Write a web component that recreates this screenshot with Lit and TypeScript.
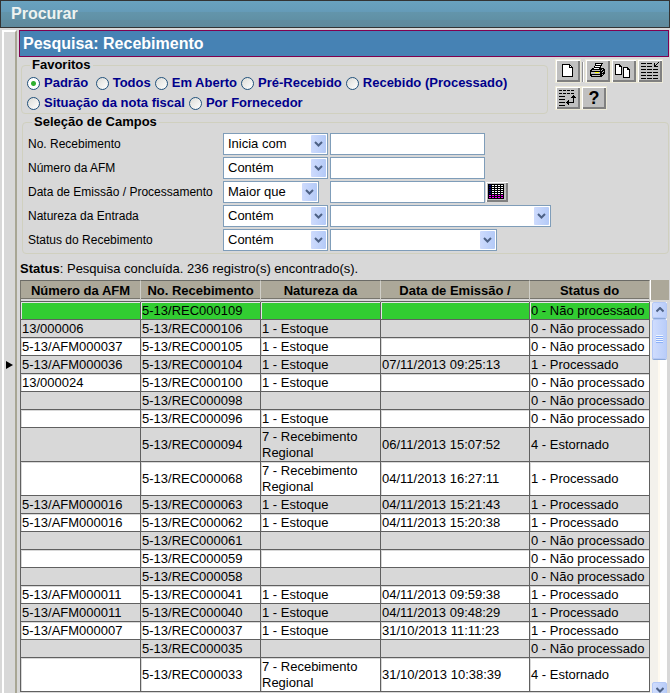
import { LitElement, html, css, svg } from "lit";
import { customElement, property, state } from "lit/decorators.js";
import { classMap } from "lit/directives/class-map.js";

type Row = [string, string, string, string, string];

const PENDING = "0 - Não processado";
const DONE = "1 - Processado";
const VOID = "4 - Estornado";
const STOCK = "1 - Estoque";
const REGIONAL = "7 - Recebimento Regional";

const ROWS: Row[] = [
  ["", "5-13/REC000109", "", "", PENDING],
  ["13/000006", "5-13/REC000106", STOCK, "", PENDING],
  ["5-13/AFM000037", "5-13/REC000105", STOCK, "", PENDING],
  ["5-13/AFM000036", "5-13/REC000104", STOCK, "07/11/2013 09:25:13", DONE],
  ["13/000024", "5-13/REC000100", STOCK, "", PENDING],
  ["", "5-13/REC000098", "", "", PENDING],
  ["", "5-13/REC000096", STOCK, "", PENDING],
  ["", "5-13/REC000094", REGIONAL, "06/11/2013 15:07:52", VOID],
  ["", "5-13/REC000068", REGIONAL, "04/11/2013 16:27:11", DONE],
  ["5-13/AFM000016", "5-13/REC000063", STOCK, "04/11/2013 15:21:43", DONE],
  ["5-13/AFM000016", "5-13/REC000062", STOCK, "04/11/2013 15:20:38", DONE],
  ["", "5-13/REC000061", "", "", PENDING],
  ["", "5-13/REC000059", "", "", PENDING],
  ["", "5-13/REC000058", "", "", PENDING],
  ["5-13/AFM000011", "5-13/REC000041", STOCK, "04/11/2013 09:59:38", DONE],
  ["5-13/AFM000011", "5-13/REC000040", STOCK, "04/11/2013 09:48:29", DONE],
  ["5-13/AFM000007", "5-13/REC000037", STOCK, "31/10/2013 11:11:23", DONE],
  ["", "5-13/REC000035", "", "", PENDING],
  ["", "5-13/REC000033", REGIONAL, "31/10/2013 10:38:39", VOID],
];

const HEADINGS = ["Número da AFM", "No. Recebimento", "Natureza da", "Data de Emissão /", "Status do"];

const FAVORITES = [
  ["Padrão\u00a0", "Todos", "Em Aberto", "Pré-Recebido", "Recebido (Processado)"],
  ["Situação da nota fiscal", "Por Fornecedor"],
];

interface Field {
  id: string;
  label: string;
  operator: string;
  kind: "text" | "date" | "wide" | "medium";
}

const FIELDS: Field[] = [
  { id: "recebimento", label: "No. Recebimento", operator: "Inicia com", kind: "text" },
  { id: "afm", label: "Número da AFM", operator: "Contém", kind: "text" },
  { id: "data", label: "Data de Emissão / Processamento", operator: "Maior que", kind: "date" },
  { id: "natureza", label: "Natureza da Entrada", operator: "Contém", kind: "wide" },
  { id: "status", label: "Status do Recebimento", operator: "Contém", kind: "medium" },
];

const bars = (x: number, w: number, from: number, to: number) => {
  const ys: number[] = [];
  for (let y = from; y <= to; y += 3) ys.push(y);
  return ys.map((y) => svg`<rect x=${x} y=${y} width=${w} height="1" fill="#000"/>`);
};

const ICONS = {
  page: svg`<path d="M7.5 5.5h7l3 3v9h-10z" fill="#fff" stroke="#000"/><path d="M14.5 5.5v3h3" fill="none" stroke="#000"/>`,
  print: svg`
    <path d="M5 11h1v-1h1v-1h12v1h1v5h-1v1h-1v1h-1v1h-11v-1h-1z" fill="#000"/>
    <path d="M10 4h8v1h-1v2h-1v2h-1v1h-7v-1h1v-2h1z" fill="#000"/>
    <path d="M11 5h5v1h-5zM10 7h5v1h-5zM9 9h5v1h-5z" fill="#fff"/>
    <path d="M7 11h8v1h-8zM6 13h9v2h-9zM7 16h8v1h-8z" fill="#c0c0c0"/>
    <path d="M17 10h1v1h-1v1h-1v-1h1zM17 13h1v1h-1zM18 12h1v1h-1zM17 15h1v1h-1z" fill="#c0c0c0"/>
    <path d="M10 13h4v1h-4z" fill="#ff0"/>`,
  copy: svg`
    <path d="M4.5 5.5h4l2 2v8h-6z" fill="#fff" stroke="#000"/><path d="M8.5 5.5v2h2" fill="none" stroke="#000"/>
    <path d="M12.5 8.5h4l2 2v8h-6z" fill="#fff" stroke="#000"/><path d="M16.5 8.5v2h2" fill="none" stroke="#000"/>`,
  collapse: svg`
    ${bars(4, 5, 4, 19)}${bars(10, 5, 4, 19)}${bars(16, 5, 10, 19)}
    <path d="M22 3h-1v1h-1v1h-1v1h-1v-2h-1v4h4v-1h-2v-1h1v-1h1v-1h1z" fill="#000"/>`,
  layout: svg`
    ${[4, 8, 12, 16].map((x) => bars(x, 3, 4, 7))}
    ${bars(4, 6, 10, 19)}
    <path d="M18 9h1v1h1v1h1v1h-2v5h-5v2h-1v-1h-1v-1h-1v-1h1v-1h1v-1h1v2h4v-4h-2v-1h1v-1h1z" fill="#000"/>`,
};

const chevron = (up: boolean) => svg`
  <svg class="chev" viewBox="0 0 8 6" width="8" height="6" aria-hidden="true">
    <path d=${up ? "M0.5 4.5L4 1L7.5 4.5" : "M0.5 1L4 4.5L7.5 1"} fill="none" stroke="#4d6185" stroke-width="2"/>
  </svg>`;

@customElement("xp-scrollbar")
export class XpScrollbar extends LitElement {
  static styles = css`
    :host {
      display: flex;
      flex-direction: column;
      flex: 1;
      padding: 0 2px;
      background: linear-gradient(90deg, #f3f1ec 0 8px, #fffaf0 8px 10px, #fff 10px 17px, #d8d8d8 17px);
    }
    button,
    .thumb {
      box-sizing: border-box;
      width: 15px;
      flex: none;
      display: flex;
      align-items: center;
      justify-content: center;
      padding: 0;
      border: 1px solid #b4c8f6;
      border-radius: 2px;
      background: linear-gradient(90deg, #cfdcfd, #b9cdf9);
      box-shadow: 0 1px 0 #8da9d8;
    }
    button {
      height: 16px;
    }
    .thumb {
      height: 40px;
      margin-top: 1px;
    }
    .grip {
      width: 7px;
      height: 8px;
      background: repeating-linear-gradient(#eef4fe 0 1px, #8cb0f8 1px 2px);
    }
    .space {
      flex: 1;
    }
  `;
  render() {
    return html`
      <button aria-label="Rolar para cima">${chevron(true)}</button>
      <div class="thumb"><span class="grip"></span></div>
      <div class="space"></div>
      <button aria-label="Rolar para baixo">${chevron(false)}</button>
    `;
  }
}

@customElement("tool-button")
export class ToolButton extends LitElement {
  @property() icon = "";
  @property() label = "";
  static styles = css`
    :host {
      display: block;
      flex: none;
    }
    button {
      box-sizing: border-box;
      display: grid;
      place-items: center;
      width: 26px;
      height: 24px;
      padding: 0;
      border: 1px solid #ece9d8;
      background: #c0c0c0;
      box-shadow: inset 1px 1px 0 #fff, inset -2px -2px 0 #808080;
      color: #000;
      font: bold 18px/20px "Liberation Sans", Arial, sans-serif;
    }
    svg {
      display: block;
      margin: -1px;
    }
  `;
  render() {
    const art = ICONS[this.icon as keyof typeof ICONS];
    return html`<button aria-label=${this.label} title=${this.label}>
      ${art
        ? html`<svg viewBox="0 0 26 24" width="26" height="24" shape-rendering="crispEdges" aria-hidden="true">${art}</svg>`
        : "?"}
    </button>`;
  }
}

@customElement("app-root")
export class AppRoot extends LitElement {
  @state() private favorite = FAVORITES[0][0];
  @state() private selected = 0;

  static styles = css`
    :host {
      display: block;
      height: 100vh;
      overflow: hidden;
      background: #d8d8d8;
      color: #000;
      font: 13px/16px "Liberation Sans", Arial, sans-serif;
    }
    .window-title {
      box-sizing: border-box;
      height: 28px;
      margin: 0;
      padding-left: 10px;
      border: 1px solid #333;
      background: linear-gradient(#69a2bf 0, #659bb8 11px, #6395ab 11px, #6090a5 19px, #608ca0 19px, #5f899c);
      color: #eef3f0;
      font-size: 16px;
      line-height: 26px;
    }
    .body {
      display: flex;
      gap: 2px;
      min-height: calc(100vh - 30px);
      padding: 2px 1px 0 2px;
    }
    .splitter {
      box-sizing: border-box;
      flex: none;
      width: 15px;
      padding: 0;
      border: solid;
      border-width: 2px 2px 0 2px;
      border-color: #fff #a8a694 #fff #fff;
      background: #d8d8d8;
      display: flex;
      align-items: center;
      justify-content: center;
    }
    main {
      flex: 1;
      min-width: 0;
      display: flex;
      flex-direction: column;
    }
    .title {
      box-sizing: border-box;
      height: 27px;
      margin: 0;
      padding-left: 3px;
      border: 1px solid #80004f;
      background: #4682b4;
      color: #fff;
      font-size: 16px;
      line-height: 25px;
    }
    .top {
      display: flex;
      align-items: flex-start;
      gap: 7px;
      padding-left: 2px;
    }
    fieldset {
      min-width: 0;
      margin: 0;
      border: 1px solid #d0d0bf;
      border-radius: 4px;
    }
    legend {
      padding: 0 2px;
      margin-left: 3px;
      font-weight: bold;
    }
    .favorites {
      flex: 1;
      padding: 0 5px;
    }
    .options {
      display: flex;
      gap: 4px;
      height: 20px;
    }
    .option {
      display: flex;
      align-items: center;
      gap: 4px;
      color: #00008b;
      font-weight: bold;
      white-space: nowrap;
    }
    .option input {
      appearance: none;
      box-sizing: border-box;
      width: 13px;
      height: 13px;
      margin: 0;
      border: 1px solid #21517b;
      border-radius: 50%;
      background: linear-gradient(135deg, #dcdcd7, #fff);
    }
    .option input:checked {
      background: radial-gradient(circle, #30b030 0 2px, #fff 3px);
    }
    .tools {
      flex: none;
      width: 114px;
      display: flex;
      flex-wrap: wrap;
      row-gap: 3px;
      padding-top: 2px;
    }
    .rule {
      box-sizing: border-box;
      width: 2px;
      height: 20px;
      margin: 3px 1px 0;
      border-left: 1px solid #909090;
      border-right: 1px solid #fff;
    }
    .criteria {
      margin-left: 3px;
      padding: 3px 5px 2px;
    }
    .criteria legend {
      margin-left: 4px;
    }
    .fields {
      display: grid;
      grid-template-columns: 195px 105px 1fr;
      grid-auto-rows: 22px;
      gap: 2px;
      column-gap: 0;
    }
    .fields label {
      font-size: 12px;
      line-height: 22px;
      white-space: nowrap;
    }
    .value {
      display: flex;
      align-items: center;
      gap: 1px;
      padding-left: 2px;
    }
    select,
    .text {
      box-sizing: border-box;
      height: 22px;
      margin: 0;
      border: 1px solid #7f9db9;
      border-radius: 0;
      background-color: #fff;
      color: #000;
      font: inherit;
      padding: 0 4px;
    }
    select {
      appearance: none;
      width: 105px;
      background-image: url("data:image/svg+xml,%3Csvg xmlns='http://www.w3.org/2000/svg' width='15' height='18'%3E%3ClinearGradient id='g'%3E%3Cstop stop-color='%23cedbfd'/%3E%3Cstop offset='1' stop-color='%23b4caf7'/%3E%3C/linearGradient%3E%3Crect width='15' height='18' rx='1' fill='url(%23g)'/%3E%3Cpath d='M4 7l3.5 3.5L11 7' fill='none' stroke='%234d6185' stroke-width='2'/%3E%3C/svg%3E");
      background-repeat: no-repeat;
      background-position: right 1px center;
    }
    select.date {
      width: 96px;
    }
    select.wide {
      width: 221px;
    }
    select.medium {
      width: 167px;
    }
    .text {
      width: 155px;
    }
    .calendar {
      width: 22px;
      height: 20px;
      padding: 0;
      border: 0;
      background: #c0c0c0;
      box-shadow: inset 1px 1px 0 #fff, inset -2px -2px 0 #808080;
    }
    .calendar svg {
      display: block;
    }
    .status {
      margin: 0;
      padding: 1px 1px 0;
      line-height: 28px;
      height: 25px;
    }
    .results {
      display: flex;
      align-items: stretch;
      padding-left: 1px;
    }
    .grid {
      flex: 1;
      min-width: 0;
      padding-bottom: 6px;
    }
    table {
      width: 100%;
      table-layout: fixed;
      border-collapse: separate;
      border-spacing: 0;
    }
    .c-afm {
      width: 121px;
    }
    .c-rec,
    .c-status {
      width: 120px;
    }
    .c-date {
      width: 149px;
    }
    th {
      box-sizing: border-box;
      height: 22px;
      padding: 0 0 1px;
      border-top: 1px solid #6b6b66;
      border-bottom: 1px solid #606060;
      border-right: 1px solid #d0cfc8;
      background: #aca899;
      box-shadow: inset 0 -2px 0 #d8d8d8, inset 0 -3px 0 #77756c;
      line-height: 19px;
      white-space: nowrap;
    }
    th:first-child {
      border-left: 1px solid #77756c;
    }
    td {
      padding: 1px 0 0 1px;
      height: 16px;
      border-right: 1px solid #606060;
      border-bottom: 1px solid #606060;
      background: #fff;
      box-shadow: inset 1px 1px 0 #d8d8d8;
    }
    td:first-child {
      border-left: 1px solid #606060;
    }
    .alt td {
      background: #d8d8d8;
    }
    .current td {
      background: #32cd32;
      box-shadow: inset 1px 1px 0 #e4e4e4;
    }
    .side {
      flex: none;
      width: 19px;
      display: flex;
      flex-direction: column;
    }
    .corner {
      box-sizing: border-box;
      height: 20px;
      border-left: 1px solid #fff;
      background: #aca899;
      margin-bottom: 2px;
    }
  `;

  private renderField(f: Field) {
    return html`
      <label for=${f.id}>${f.label}</label>
      <div>
        <select class=${f.kind === "date" ? "date" : ""} aria-label="Operador: ${f.label}">
          <option>${f.operator}</option>
        </select>
      </div>
      <div class="value">
        ${f.kind === "wide" || f.kind === "medium"
          ? html`<select id=${f.id} class=${f.kind}><option></option></select>`
          : html`<input id=${f.id} class="text" type="text" />`}
        ${f.kind === "date" ? this.renderCalendar() : ""}
      </div>
    `;
  }

  private renderCalendar() {
    const cells = [0, 1, 2, 3, 4, 5, 6].flatMap((r) =>
      [0, 1, 2, 3, 4].map((c) => {
        const fill = r > 4 ? "#f0f" : c === 0 ? "#000080" : "#fff";
        return svg`<rect x=${3 + c * 3} y=${3 + r * 2} width="2" height="1" fill=${fill}/>`;
      })
    );
    return html`<button class="calendar" aria-label="Calendário">
      <svg viewBox="0 0 22 20" width="22" height="20" shape-rendering="crispEdges" aria-hidden="true">
        <rect x="2" y="2" width="16" height="15" fill="#000" />${cells}
      </svg>
    </button>`;
  }

  render() {
    return html`
      <h1 class="window-title">Procurar</h1>
      <div class="body">
        <button class="splitter" aria-label="Expandir painel">
          <svg viewBox="0 0 7 8" width="7" height="8" aria-hidden="true"><path d="M0 0L7 4L0 8z" fill="#000" /></svg>
        </button>
        <main>
          <h2 class="title">Pesquisa: Recebimento</h2>
          <div class="top">
            <fieldset class="favorites">
              <legend>Favoritos</legend>
              ${FAVORITES.map(
                (line) => html`<div class="options">
                  ${line.map(
                    (name) => html`<label class="option"
                      ><input
                        type="radio"
                        name="favorite"
                        .checked=${this.favorite === name}
                        @change=${() => (this.favorite = name)}
                      />${name}</label
                    >`
                  )}
                </div>`
              )}
            </fieldset>
            <div class="tools">
              <tool-button icon="page" label="Novo"></tool-button>
              <span class="rule"></span>
              <tool-button icon="print" label="Imprimir"></tool-button>
              <tool-button icon="copy" label="Copiar"></tool-button>
              <tool-button icon="collapse" label="Recolher"></tool-button>
              <tool-button icon="layout" label="Organizar"></tool-button>
              <tool-button icon="help" label="Ajuda"></tool-button>
            </div>
          </div>
          <fieldset class="criteria">
            <legend>Seleção de Campos</legend>
            <div class="fields">${FIELDS.map((f) => this.renderField(f))}</div>
          </fieldset>
          <p class="status"><b>Status</b>: Pesquisa concluída. 236 registro(s) encontrado(s).</p>
          <div class="results">
            <div class="grid">
              <table>
                <colgroup>
                  <col class="c-afm" />
                  <col class="c-rec" />
                  <col />
                  <col class="c-date" />
                  <col class="c-status" />
                </colgroup>
                <thead>
                  <tr>${HEADINGS.map((h) => html`<th scope="col">${h}</th>`)}</tr>
                </thead>
                <tbody>
                  ${ROWS.map(
                    (row, i) => html`<tr
                      class=${classMap({ alt: i % 2 === 1, current: i === this.selected })}
                      @click=${() => (this.selected = i)}
                    >
                      ${row.map((cell) => html`<td>${cell}</td>`)}
                    </tr>`
                  )}
                </tbody>
              </table>
            </div>
            <div class="side">
              <div class="corner"></div>
              <xp-scrollbar></xp-scrollbar>
            </div>
          </div>
        </main>
      </div>
    `;
  }
}
